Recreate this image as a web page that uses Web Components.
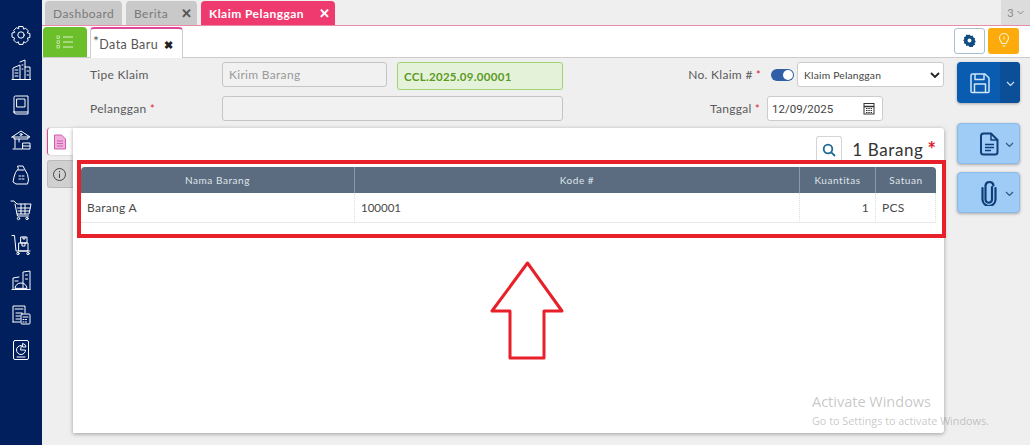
<!DOCTYPE html>
<html><head><meta charset="utf-8"><style>
html,body{margin:0;height:100%;overflow:hidden}
body{width:1030px;height:445px;font-family:Lato,"Open Sans",sans-serif;color:#444;background:#efefef;display:flex;position:relative}
</style></head><body>
<app-sidebar></app-sidebar>
<app-main></app-main>
<script>
function def(name,html,init){customElements.define(name,class extends HTMLElement{constructor(){super();this.attachShadow({mode:'open'}).innerHTML=typeof html==='function'?html(this):html;}});}
const ic=(b)=>`<svg width="22" height="22" viewBox="0 0 22 22" fill="none" stroke="#fff" stroke-width="1" stroke-linejoin="round" stroke-linecap="round">${b}</svg>`;
const icons=[
'<path d="M9 2.500h4l.6 2.600 2-.9 2.700 2.700-1 2 2.600.6v4l-2.600.6 1 2-2.700 2.700-2-1-.6 2.600H9l-.6-2.600-2 1-2.700-2.700 1-2L2 13v-4l2.700-.6-1-2 2.700-2.700 2 .9z"/><circle cx="11" cy="11" r="3.200"/>',
'<path d="M2 20.500h18.500M3 20.500V9l7-3V20.500M10 3l5-2V20.500M15 8h5v12.500M5 11h3M5 14h3M5 17h3M12 6h1M12 10h1M17 12h1.500M17 16h1.500"/>',
'<path d="M4 18V3.500Q4 2 5.500 2H18V20H6Q4 20 4 18zM4 18h14M7 5h8v8H7z"/>',
'<path d="M2 8l9-6 9 6H2zM4 8v2h14V8M5 10v9M9 10v3M3 20h9M13 14h7v6h-7zM13 17h7"/><circle cx="11" cy="5.500" r="1"/>',
'<path d="M8 2h5l1.500 3q4 5 4 11l-1 4H6l-3-2 1-5q1-5 4-8zM8 6h6"/><path d="M9 12h1.500M12 12h2M9 15h1.500M12 15h2"/>',
'<path d="M1 2h3l3 3h14l-2 10H7L5 5M7.500 9h12.500M8 12h11.500M11 5v10M15 5v10M7 15l.5 2h11"/><circle cx="8.500" cy="19.500" r="1.200"/><circle cx="17" cy="19.500" r="1.200"/>',
'<path d="M2 1.500h2.500L6 17h14M9 9h9v8H9zM11 3h6v6h-6zM13 3v2h2V3M12 9v3h3V9"/><circle cx="8" cy="19.500" r="1.200"/><circle cx="18" cy="19.500" r="1.200"/>',
'<path d="M2 20.500h18M3 20.500V9l6-1M13 20.500V3l7-1v18.500M15.500 6h2M15.500 10h2M5 19q1-5 6-5t6 5zM5 12h3"/>',
'<path d="M3 18V2h12v7M3 18h7M6 9h6M6 12h4M6 15h4M5 5h8"/><rect x="11" y="10" width="9" height="10" rx="1"/><path d="M13 13h5M13 15.500h1M15.500 15.500h1M13 18h1M15.500 18h1"/>',
'<rect x="3.500" y="1.500" width="15" height="19" rx="1.500"/><path d="M11 6.500a4.500 4.500 0 1 0 4.500 4.500H11zM13 4.500a4 4 0 0 1 3 3.500h-3zM7 18h8"/>'
];
def('app-sidebar',`<style>:host{display:flex;flex-direction:column;align-items:center;width:42px;height:445px;background:#001f5c;padding-top:24px;box-sizing:border-box;gap:13px;flex:none}svg{display:block}</style>${icons.map(ic).join('')}`);

def('top-tab',h=>`<style>:host{display:flex;align-items:center;box-sizing:border-box;height:24px;border-radius:4px 4px 0 0;background:${h.hasAttribute('active')?'#ee3a6f':'#c9c9c9'};color:${h.hasAttribute('active')?'#fff':'#7a7a7a'};font-size:12px;letter-spacing:.45px;padding:0 8px;justify-content:space-between;font-weight:${h.hasAttribute('active')?700:400};width:${h.getAttribute('w')}px}b{font-size:13px;color:${h.hasAttribute('active')?'#fff':'#555'};margin-right:-3px}</style><span><slot></slot></span>${h.hasAttribute('close')?'<b>✕</b>':''}`);

def('tab-bar',`<style>:host{display:flex;align-items:flex-end;gap:4px;height:25px;padding-left:3px;border-bottom:1px solid #ea8ba7;flex:none;position:relative;background:#efefef}
.more{margin-left:auto;width:29px;height:25px;background:#dcdcdc;color:#888;font-size:11px;display:flex;align-items:center;justify-content:center;gap:3px}</style>
<top-tab w="77">Dashboard</top-tab><top-tab w="71" close>Berita</top-tab><top-tab w="134" close active>Klaim Pelanggan</top-tab>
<div class="more">3<svg width="7" height="5" viewBox="0 0 7 5" fill="none" stroke="#888"><path d="M.5 1l3 3 3-3"/></svg></div>`);

def('sub-bar',`<style>:host{display:flex;align-items:flex-end;height:31px;background:#fff;border-bottom:1px solid #ccc;padding-left:1px;flex:none;position:relative}
.list{width:44px;height:30px;background:#6abf2a;border-radius:4px 4px 0 0;display:flex;align-items:center;justify-content:center}
.tab{box-sizing:border-box;margin-left:3px;width:93px;height:31px;margin-bottom:-1px;background:#fff;border:1px solid #ccc;border-bottom:none;border-top:2px solid #e0479a;border-radius:4px 4px 0 0;display:flex;align-items:center;padding:2px 0 0 2px;font-size:12.500px;letter-spacing:.4px;color:#555}
.tab sup{font-size:14px;line-height:0;position:relative;top:-3px;vertical-align:baseline}
.tab b{color:#222;font-size:11px;margin-left:6px}
.end{margin-left:auto;display:flex;gap:3px;padding:0 11px 2px 0;align-self:center}
.btn{box-sizing:border-box;width:31px;height:26px;border-radius:3px;display:flex;align-items:center;justify-content:center}
.gear{background:#fff;border:1px solid #a8c0d0}.bulb{background:#fdab0c}</style>
<div class="list"><svg width="18" height="14" viewBox="0 0 18 14" fill="none" stroke="#dff0cc"><path d="M7 2h10M7 7h10M7 12h10" stroke-width="1.200"/><rect x="1" y="1" width="2.500" height="2.500" stroke-width=".7"/><rect x="1" y="5.800" width="2.500" height="2.500" stroke-width=".7"/><rect x="1" y="10.500" width="2.500" height="2.500" stroke-width=".7"/></svg></div>
<div class="tab"><span><sup>*</sup>Data Baru</span><b>✖</b></div>
<div class="end"><div class="btn gear"><svg width="13" height="13" viewBox="0 0 13 13"><path fill="#0f4c81" fill-rule="evenodd" d="M6.500.5l1.300 1.400 1.900-.3.600 1.900 1.800.7-.4 1.900 1.100 1.400-1.100 1.400.4 1.900-1.800.7-.6 1.900-1.900-.3L6.500 13l-1.300-1.400-1.900.3-.6-1.900-1.800-.7.4-1.900L.2 6.500l1.100-1.400L.9 3.200l1.800-.7.6-1.900 1.900.3zM6.500 4.500a2 2 0 1 0 0 4 2 2 0 0 0 0-4z"/></svg></div>
<div class="btn bulb"><svg width="12" height="15" viewBox="0 0 12 15" fill="none" stroke="#fff5c8" stroke-width="1.100"><path d="M4 10.500C3.500 8.500 1.500 7.500 1.500 5a4.500 4.500 0 0 1 9 0C10.500 7.500 8.500 8.500 8 10.500zM4.500 13h3M6 3.500v3"/></svg></div></div>`);

def('form-field',h=>`<style>:host{display:block;box-sizing:border-box;height:${h.getAttribute('h')||25}px;width:${h.getAttribute('w')}px;border:1px solid ${h.getAttribute('bc')||'#c5c5c5'};border-radius:3px;background:${h.getAttribute('bg')||'#f1f1f1'};padding:0 6px;font-size:${h.getAttribute('fs')||12}px;letter-spacing:.3px;display:flex;align-items:center;justify-content:space-between;color:${h.getAttribute('fg')||'#999'};font-weight:${h.getAttribute('fw')||400}}</style><span><slot></slot></span><slot name="end"></slot>`);

def('action-btn',h=>`<style>:host{display:flex;box-sizing:border-box;width:63px;height:${h.getAttribute('h')}px;border-radius:4px;background:${h.hasAttribute('dark')?'#0a5cb0':'#9fcbf7'};border:${h.hasAttribute('dark')?'0':'1px solid #8dbbe8'};box-shadow:0 1px 3px rgba(0,0,0,.3);overflow:hidden}
.a{flex:1;display:flex;align-items:center;justify-content:center;padding-left:${h.hasAttribute('dark')?3:20}px}
.c{width:${h.hasAttribute('dark')?20:19}px;display:flex;align-items:center;justify-content:center;background:${h.hasAttribute('dark')?'#0a4f98':'transparent'};padding-top:2px}</style>
<div class="a"><slot></slot></div><div class="c"><svg width="9" height="6" viewBox="0 0 9 6" fill="none" stroke="${h.hasAttribute('dark')?'#cfe2f5':'#2a5a8a'}" stroke-width="1.200"><path d="M1 1l3.500 3.500L8 1"/></svg></div>`);

def('data-grid',`<style>:host{display:block;margin:0 8px 0 8px;font-size:12px}
.t{display:grid;grid-template-columns:273px 445px 76px 61px}
.h{background:#5b6c80;height:26px;display:flex;align-items:center;justify-content:center;color:#dfe5ea;font-size:10px;letter-spacing:.55px;border-left:1px solid #8b98a8;box-sizing:border-box}
.h:first-child{border-left:0;border-top-left-radius:4px}.h:nth-child(4){border-top-right-radius:4px}
.d{height:30px;display:flex;align-items:center;padding:0 6px;color:#4a4a4a;border-bottom:1px solid #e8e8e8;border-left:1px dotted #ddd;box-sizing:border-box;letter-spacing:.3px}
.d:nth-child(5){border-left:0}.d:nth-child(6){font-size:11.500px;letter-spacing:0}.d:nth-child(8){border-right:1px dotted #ddd}.r{justify-content:flex-end}</style>
<div class="t"><div class="h">Nama Barang</div><div class="h">Kode #</div><div class="h">Kuantitas</div><div class="h">Satuan</div>
<div class="d">Barang A</div><div class="d">100001</div><div class="d r">1</div><div class="d">PCS</div></div>`);

def('item-panel',`<style>:host{display:flex;flex-direction:column;box-sizing:border-box;width:871px;height:305px;background:#fff;border-radius:0 3px 3px 0;box-shadow:0 1px 4px rgba(0,0,0,.35)}
.top{height:39px;display:flex;align-items:center;justify-content:flex-end;padding:3px 8px 0 0;box-sizing:border-box;font-size:17px;color:#333;letter-spacing:.6px}
.s{box-sizing:border-box;width:26px;height:26px;border:1px solid #d5d5d5;border-bottom:0;border-radius:3px 3px 0 0;display:flex;align-items:center;justify-content:center;margin-right:10px}
i{color:#d9232e;font-style:normal;font-weight:700;font-size:20px;line-height:17px;margin-left:4px;letter-spacing:0}</style>
<div class="top"><div class="s"><svg width="14" height="14" viewBox="0 0 14 14" fill="none" stroke="#1f6a94" stroke-width="1.800"><circle cx="6" cy="6" r="4.300"/><path d="M9.300 9.300L13 13"/></svg></div><span>1 Barang</span><i>*</i></div>
<data-grid></data-grid>`);

def('side-tabs',`<style>:host{display:flex;flex-direction:column;width:26px;gap:5px;flex:none}
div{box-sizing:border-box;height:27px;display:flex;align-items:center;justify-content:center;border-radius:3px 0 0 3px}
.a{background:#fff;border-left:1.500px solid #e0479a;box-shadow:0 0 2px rgba(0,0,0,.25);padding-right:2px}
.b{height:28px;background:#d0d0d0;border:1px solid #bbb;border-right:0;padding-right:2px}</style>
<div class="a"><svg width="14" height="16" viewBox="0 0 14 16" fill="#efb0db" stroke="#cf5cb0" stroke-width="1"><path d="M1.500 1h7l4 4v10h-11z"/><path d="M4 7h6M4 9.500h6M4 12h6" fill="none"/></svg></div>
<div class="b"><svg width="15" height="15" viewBox="0 0 15 15" fill="none" stroke="#444"><circle cx="7.500" cy="7.500" r="6"/><path d="M7.500 6.500V11M7.500 4v1.300"/></svg></div>`);

def('app-main',`<style>:host{display:flex;flex-direction:column;flex:1;position:relative;min-width:0;height:445px}
.strip{position:absolute;left:700px;right:0;top:0;height:1px;background:linear-gradient(90deg,#ddd,#6a7c94 40%,#6a7c94)}
.body{display:flex;padding:4px 10px 0 5px;gap:13px;flex:1}
.left{width:897px}
.form{display:grid;align-content:start;height:66px;box-sizing:border-box;font-size:12px;color:#5a5a5a}
.row{display:flex;align-items:flex-start}
.lab{letter-spacing:.3px;line-height:25px}
.l1{margin-left:43px;width:132px}
em{color:#d9232e;font-style:normal;font-size:11px}
.r1{height:28px;margin-bottom:6px}.r2{height:25px}
.lr{text-align:right}
.toggle{width:23px;height:12px;margin-top:7px;border-radius:7px;background:#2f5fa5;position:relative;margin-left:10px;margin-right:3px}
.toggle:after{content:"";position:absolute;right:1px;top:1px;width:10px;height:10px;border-radius:50%;background:#fff}
.sel{box-sizing:border-box;width:147px;height:25px;border:1px solid #ccc;border-radius:3px;background:#fff;font-size:10.300px;letter-spacing:.2px;color:#444;display:flex;align-items:center;justify-content:space-between;padding:0 3px 0 6px}
.date{box-sizing:border-box;width:116px;height:25px;border:1px solid #ccc;border-radius:3px;background:#fff;font-family:Roboto,sans-serif;font-size:11.500px;color:#444;display:flex;align-items:center;justify-content:space-between;padding:0 7px 0 4px;margin-left:7px}
.work{display:flex}
.act{display:flex;flex-direction:column;width:63px;flex:none}
</style>
<div class="strip"></div>
<tab-bar></tab-bar><sub-bar></sub-bar>
<div class="body"><div class="left"><div class="form">
<div class="row r1"><div class="lab l1">Tipe Klaim</div><form-field w="165">Kirim Barang</form-field><form-field w="166" h="28" fs="11.500" bg="#e5f2da" bc="#9fd46e" fg="#5b9a1e" fw="700" style="margin-left:10px">CCL.2025.09.00001</form-field>
 <div class="lab lr" style="width:198px">No. Klaim # <em>*</em></div><div class="toggle"></div><div class="sel">Klaim Pelanggan<svg width="10" height="6" viewBox="0 0 10 6" fill="none" stroke="#222" stroke-width="1.800"><path d="M1 1l4 4 4-4"/></svg></div></div>
<div class="row r2"><div class="lab l1">Pelanggan <em>*</em></div><form-field w="341"></form-field>
 <div class="lab lr" style="width:197px">Tanggal <em>*</em></div><div class="date">12/09/2025<svg width="12" height="13" viewBox="0 0 12 13" fill="none" stroke="#333"><rect x="1" y="1.500" width="10" height="10.500"/><path d="M1 4.500h10" stroke-width="1.500"/><path d="M3 6.500h6M3 8.500h6M3 10.500h6" stroke-dasharray="1.500 .8"/></svg></div></div>
</div>
<div class="work"><side-tabs></side-tabs><item-panel></item-panel></div></div>
<div class="act"><action-btn dark h="41"><svg width="24" height="24" viewBox="0 0 24 24" fill="none" stroke="#cfe6f7" stroke-width="1.500" stroke-linejoin="round"><path d="M3 4.500Q3 3 4.500 3H17l4 4v13.500q0 1-1 1H4q-1 0-1-1z"/><path d="M7 3v5.500h9V3M6.500 21.500V13h11v8.500"/></svg></action-btn>
<action-btn h="41" style="margin-top:20px"><svg width="20" height="24" viewBox="0 0 20 24" fill="none" stroke="#0f3f78" stroke-width="2" stroke-linejoin="round"><path d="M2 4q0-2.500 2.500-2.500H12L18.500 8v12q0 2.500-2.500 2.500H4.500Q2 22.500 2 20z"/><path d="M12 1.500V8h6.500M6 12.500h9M6 15.500h9M6 18.500h6" stroke-width="1.500"/></svg></action-btn>
<action-btn h="41" style="margin-top:8px"><svg width="16" height="26" viewBox="0 0 16 26" fill="none" stroke="#0f3f78" stroke-width="2.200" stroke-linecap="round"><path d="M11 7v12.500a3.200 3.200 0 0 1-6.500 0V5.500a4 4 0 0 1 4-3.500 4 4 0 0 1 4 3.500"/><path d="M14.500 8v11.500a6.500 6.500 0 0 1-13 0V8"/></svg></action-btn></div>
</div>`);

def('annotation-layer',`<style>:host{position:absolute;inset:0;pointer-events:none;display:block}
.box{position:absolute;left:77px;top:160px;width:861px;height:70px;border:4px solid #e8202a}
svg{position:absolute;left:485px;top:255px}
.wm{position:absolute;left:812px;top:393px;color:rgba(120,120,120,.42);font-family:"Open Sans",sans-serif;font-size:14.500px;line-height:18px}
.wm small{display:block;font-size:10.800px;line-height:17px;margin-top:1px;white-space:nowrap}</style>
<div class="box"></div>
<svg width="84" height="110" viewBox="485 255 84 110"><path d="M527.500 263L492 311h18v47h34v-47h18z" fill="none" stroke="#e8202a" stroke-width="3" stroke-linejoin="round"/></svg>
<div class="wm">Activate Windows<small>Go to Settings to activate Windows.</small></div>`);
document.body.appendChild(document.createElement('annotation-layer'));
</script>
</body></html>
